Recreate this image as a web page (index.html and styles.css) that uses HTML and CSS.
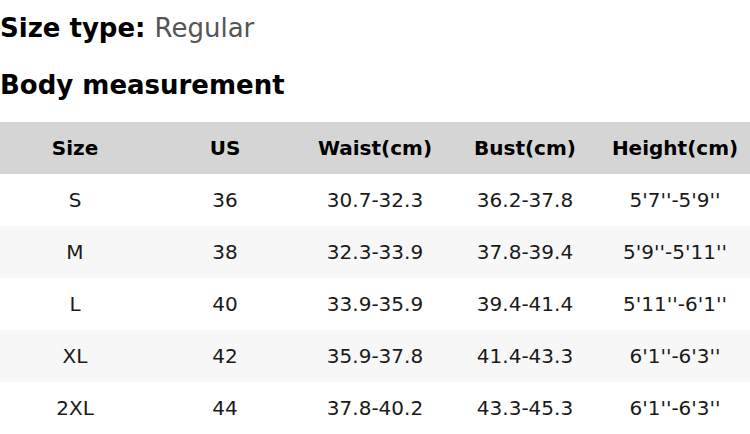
FILE: index.html
```html
<!DOCTYPE html>
<html lang="en">
<head>
<meta charset="utf-8">
<title>Size chart</title>
<link rel="stylesheet" href="styles.css">
</head>
<body>
<main class="chart">
  <h2 class="size-type"><span class="label">Size type:</span> <span class="value">Regular</span></h2>
  <h2 class="section-title">Body measurement</h2>
  <table class="size-table">
    <thead>
      <tr><th>Size</th><th>US</th><th>Waist(cm)</th><th>Bust(cm)</th><th>Height(cm)</th></tr>
    </thead>
    <tbody>
      <tr><td>S</td><td>36</td><td>30.7-32.3</td><td>36.2-37.8</td><td>5'7''-5'9''</td></tr>
      <tr><td>M</td><td>38</td><td>32.3-33.9</td><td>37.8-39.4</td><td>5'9''-5'11''</td></tr>
      <tr><td>L</td><td>40</td><td>33.9-35.9</td><td>39.4-41.4</td><td>5'11''-6'1''</td></tr>
      <tr><td>XL</td><td>42</td><td>35.9-37.8</td><td>41.4-43.3</td><td>6'1''-6'3''</td></tr>
      <tr><td>2XL</td><td>44</td><td>37.8-40.2</td><td>43.3-45.3</td><td>6'1''-6'3''</td></tr>
    </tbody>
  </table>
</main>
</body>
</html>
```

FILE: styles.css
```css
html, body {
  margin: 0;
  padding: 0;
  background: #ffffff;
}

body {
  font-family: "DejaVu Sans", sans-serif;
  color: #111111;
}

.chart {
  padding-top: 13px;
}

.size-type,
.section-title {
  margin: 0;
  font-size: 26px;
  line-height: 30px;
  font-weight: bold;
  color: #000000;
}

.size-type .value {
  font-weight: normal;
  color: #555555;
}

.section-title {
  margin-top: 27px;
}

.size-table {
  margin-top: 22px;
  width: 750px;
  border-collapse: collapse;
  table-layout: fixed;
  font-size: 20px;
}

.size-table th,
.size-table td {
  width: 150px;
  height: 52px;
  padding: 0;
  text-align: center;
  vertical-align: middle;
  white-space: nowrap;
}

.size-table th {
  background: #d5d5d5;
  font-weight: bold;
  color: #000000;
}

.size-table td {
  color: #1a1a1a;
}

.size-table tbody tr:nth-child(even) {
  background: #f7f7f7;
}
```
